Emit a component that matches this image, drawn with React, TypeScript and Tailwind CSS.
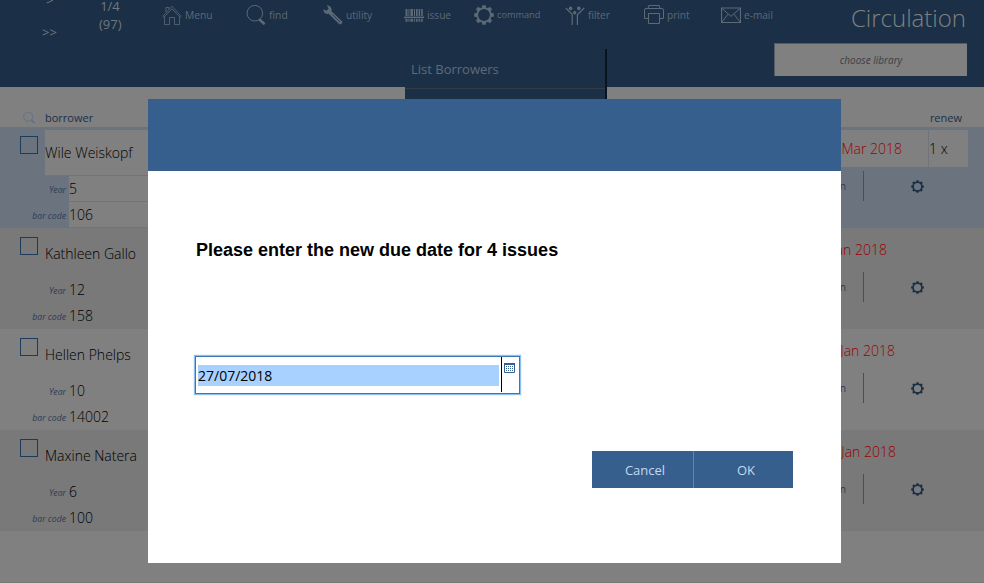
import React from "react";

type IconName = "home" | "find" | "wrench" | "barcode" | "gear" | "filter" | "print" | "mail";

function Gear({ size, stroke, ring = 1.6 }: { size: number; stroke: string; ring?: number }) {
  return (
    <svg width={size} height={size} viewBox="0 0 20 20" fill="none" stroke={stroke} className="block shrink-0">
      <circle cx="10" cy="10" r="6.8" strokeWidth={ring} />
      {[0, 45, 90, 135, 180, 225, 270, 315].map((a) => (
        <path key={a} d="M7.9 3.4 L8.3 0.2 H11.7 L12.1 3.4 Z" fill={stroke} stroke="none" transform={`rotate(${a} 10 10)`} />
      ))}
    </svg>
  );
}

function NavIcon({ name }: { name: IconName }) {
  if (name === "gear") return <Gear size={20} stroke="#5c6976" ring={1.8} />;
  return (
    <svg width="20" height="20" viewBox="0 0 20 20" fill="none" stroke="#5c6976" strokeWidth="1" className="block shrink-0">
      {name === "home" && (
        <g strokeWidth=".8">
          <path d="M0.8 11.2 L10 1.2 L19.2 11.2 L18 12.2 L10 3.8 L2 12.2 Z" />
          <path d="M2.5 12 V19.5 H7.5 V12.5 H12.5 V19.5 H17.5 V12" />
          <path d="M4 7.4 V2.5 H7 V4.3" />
        </g>
      )}
      {name === "find" && (
        <>
          <circle cx="8.8" cy="8.2" r="7.8" />
          <path d="M13.2 14.2 L18.6 19.2" strokeWidth="2.6" />
        </>
      )}
      {name === "wrench" && (
        <>
          <path
            d="M3.8 .5 L5.6 3.6 L3.6 5.8 L.5 4.2 C0 7.2 2.5 9.6 5.7 8.8 L16 19 C17.5 20.3 20.4 17.8 19 16.2 L8.5 6.2 C9.3 3 7 .1 3.8 .5 Z"
            fill="#5c6976"
            stroke="none"
          />
          <path d="M9.5 9.5 L17.2 17.2" stroke="#1b3047" strokeWidth=".8" />
        </>
      )}
      {name === "barcode" && (
        <g fill="#5c6976" stroke="none">
          {[
            [1.5, 2],
            [4.4, 1],
            [6.4, 2.6],
            [10, 1],
            [12, 1.6],
            [14.6, 1.6],
            [17.2, 1.6],
          ].map(([x, w]) => (
            <g key={x}>
              <rect x={x} y="4" width={w} height="7" />
              <rect x={x} y="14" width={w} height="2.8" />
            </g>
          ))}
          <rect x="0" y="11.6" width="20" height="1.6" />
        </g>
      )}
      {name === "filter" && (
        <>
          <g fill="#5c6976" stroke="none">
            <circle cx="5.6" cy="3.4" r="1.8" />
            <circle cx="13.8" cy="3.4" r="1.8" />
            <circle cx="9.7" cy="7.7" r="1.7" />
          </g>
          <path d="M0.8 3 L7.2 9.3 V20 M19.2 3 L12.4 9.8 V20" strokeWidth="1.2" />
        </>
      )}
      {name === "print" && (
        <>
          <path d="M4.5 13.5 H.5 V5 Q.5 3.5 2 3.5 H18 Q19.5 3.5 19.5 5 V13.5 H15.5 M4 3.5 L4.8 .5 H15.2 L16 3.5" />
          <path d="M4.5 8.5 H15.5 V18.5 H4.5 Z" />
        </>
      )}
      {name === "mail" && (
        <>
          <path d="M.5 3 H19.5 V17.5 H.5 Z" strokeWidth="1.2" />
          <path d="M1 3.5 L10 11.3 L19 3.5 M1 17 L7 9.2 M19 17 L13 9.2" />
        </>
      )}
    </svg>
  );
}

const nav: { icon: IconName; label: string; cls: string; text: string }[] = [
  { icon: "home", label: "Menu", cls: "w-[84px]", text: "text-[10.3px]" },
  { icon: "find", label: "find", cls: "w-[77px]", text: "text-[10.3px]" },
  { icon: "wrench", label: "utility", cls: "w-[81px]", text: "text-[10.1px]" },
  { icon: "barcode", label: "issue", cls: "w-[70px]", text: "text-[10.1px]" },
  { icon: "gear", label: "command", cls: "w-[91px]", text: "text-[9.2px]" },
  { icon: "filter", label: "filter", cls: "w-[79px]", text: "text-[10.1px]" },
  { icon: "print", label: "print", cls: "w-[77px]", text: "text-[10.1px]" },
  { icon: "mail", label: "e-mail", cls: "w-[53px]", text: "text-[10.1px]" },
];

const rows = [
  { name: "Wile Weiskopf", year: "5", code: "106", date: "Mar 2018", pad: "pr-[26px]", bg: "bg-[#6b747e]", selected: true },
  { name: "Kathleen Gallo", year: "12", code: "158", date: "Jan 2018", pad: "pr-[41px]", bg: "bg-[#797979]", selected: false },
  { name: "Hellen Phelps", year: "10", code: "14002", date: "Jan 2018", pad: "pr-[33px]", bg: "bg-[#808080]", selected: false },
  { name: "Maxine Natera", year: "6", code: "100", date: "Jan 2018", pad: "pr-[32px]", bg: "bg-[#797979]", selected: false },
];

function Row({ row }: { row: (typeof rows)[number] }) {
  const field = row.selected ? "bg-[#808080] border-[#70757b]" : "border-transparent";
  return (
    <div className={`flex h-[101px] justify-between pt-[3px] ${row.bg}`}>
      <div className="w-[160px]">
        <div className="flex h-[46px]">
          <div className="w-[45px] shrink-0 pl-5 pt-[6px]">
            <div className="size-[18px] border border-[#1d3c5c]" />
          </div>
          <div className={`flex grow items-center whitespace-nowrap border-b text-[14px] font-[350] text-black ${field}`}>
            {row.name}
          </div>
        </div>
        {[
          { label: "Year", value: row.year },
          { label: "bar code", value: row.code },
        ].map((f) => (
          <div key={f.label} className="flex h-[26px]">
            <div className="flex w-[69px] shrink-0 items-center justify-end pr-[3px] pt-[2px] text-[8.7px] italic text-[#2d3b55]">{f.label}</div>
            <div className={`flex grow items-center border-b text-[14px] font-[350] text-black ${field}`}>{f.value}</div>
          </div>
        ))}
      </div>
      <div className="w-[168px] pr-4">
        <div className="flex h-[37px] whitespace-nowrap text-[14px] font-[350]">
          <div className={`flex w-[113px] items-center justify-end border-r text-[#9c0000] ${field} ${row.pad}`}>{row.date}</div>
          <div className={`flex grow items-center text-black ${row.selected ? "bg-[#808080]" : ""}`}>{row.selected ? "1 x" : ""}</div>
        </div>
        <div className="flex h-[38px] items-center">
          <div className="flex h-[30px] w-[48px] items-center justify-end border-r border-[#405165] pr-[17px] pt-px text-[10.3px] text-[#2b3b55]">return</div>
          <div className="ml-[47px]">
            <Gear size={13} stroke="#1b3047" ring={2.5} />
          </div>
        </div>
      </div>
    </div>
  );
}

export default function App() {
  return (
    <div className="relative h-[583px] w-[984px] overflow-hidden border-b border-[#777777] bg-[#808080] font-['Open_Sans',sans-serif] leading-none">
      <header className="flex h-[87px] bg-[#1b3047] text-[#6f7780]">
        <div className="flex w-[162px] text-[13px]">
          <div className="w-[99px] pl-[42px]">
            <div className="-mt-[6px] h-[32px] pl-1">&gt;</div>
            <div>&gt;&gt;</div>
          </div>
          <div className="-mt-[3px] w-[22px] text-center text-[13px] leading-[18px]">
            1/4
            <br />
            (97)
          </div>
        </div>
        <div className="w-[612px]">
          <nav className="flex h-[49px] pt-[5px]">
            {nav.map((n) => (
              <div key={n.label} className={`flex h-5 shrink-0 items-center gap-[3px] whitespace-nowrap text-[#5c6976] ${n.cls} ${n.text}`}>
                <NavIcon name={n.icon} />
                <span>{n.label}</span>
              </div>
            ))}
          </nav>
          <div className="ml-[243px] h-[50px] w-[202px] border-r-2 border-[#0b141e] bg-[#1b3047]">
            <div className="flex h-10 items-center border-b border-[#333b46] pl-1.5 pt-[2px] text-[13px] text-[#5e6b78]">List Borrowers</div>
          </div>
        </div>
        <div className="flex w-[193px] flex-col">
          <h1 className="flex h-[43px] items-center justify-end pb-[7px] pr-px text-[24px] font-[350] text-[#808080]">Circulation</h1>
          <div className="flex h-[33px] items-center justify-center border-l border-t border-[#555b62] bg-[#808080] text-[10px] italic text-[#3b3f46]">
            choose library
          </div>
        </div>
      </header>

      <div className="flex h-10 items-center justify-between pl-[23px] pr-[22px] pt-[22px] text-[11px] text-[#1b3047]">
        <div className="flex items-center gap-[10px]">
          <svg width="12" height="12" viewBox="0 0 12 12" fill="none" stroke="#5d6f82">
            <circle cx="5.2" cy="4.7" r="4.6" strokeWidth=".8" />
            <path d="M8.4 8 L11.4 11" strokeWidth="1.5" />
          </svg>
          <span className="-mt-px">borrower</span>
        </div>
        <span className="-mt-px">renew</span>
      </div>

      <main>
        {rows.map((r) => (
          <Row key={r.name} row={r} />
        ))}
      </main>

      <div role="dialog" className="absolute left-[148px] top-[99px] flex h-[464px] w-[693px] flex-col bg-white">
        <div className="h-[72px] shrink-0 bg-[#365f8d]" />
        <div className="flex grow flex-col px-12">
          <h2 className="mt-[70px] h-[18px] whitespace-nowrap font-['Liberation_Sans',Arial,sans-serif] text-[18px] font-bold leading-[18px] text-black">
            Please enter the new due date for 4 issues
          </h2>
          <div className="-ml-px mt-[97px] flex h-[38px] w-[325px] border border-[#3b77b5] bg-white shadow-[0_0_1px_1px_#8fbfec]">
            <div className="flex grow items-center pl-[2px] pr-[2px]">
              <div className="flex h-[21px] w-full items-center bg-[#a8d1ff] pt-px text-[14px] text-black">27/07/2018</div>
            </div>
            <div className="mb-px w-[18px] border-l border-black pl-[2px] pt-[6px]">
              <svg width="11" height="10" viewBox="0 0 11 10" className="block">
                <path d="M.5 .5 H10.5 V9.5 H.5 Z" fill="white" stroke="#365f8d" />
                <path d="M0 1 H11" stroke="#365f8d" strokeWidth="2" />
                <path d="M2 3.5 H9 M2 5.5 H9 M2 7.5 H9" stroke="#365f8d" strokeDasharray="1 1" />
              </svg>
            </div>
          </div>
          <div className="mt-[57px] flex h-[37px] w-[201px] self-end text-[13px] text-[#c3d9ef]">
            <button className="flex w-[102px] items-center justify-center border-r border-[#6784a3] bg-[#365f8d] pl-[5px] pt-[2px]">Cancel</button>
            <button className="flex grow items-center justify-center bg-[#365f8d] pl-[5px] pt-[2px]">OK</button>
          </div>
        </div>
      </div>
    </div>
  );
}
